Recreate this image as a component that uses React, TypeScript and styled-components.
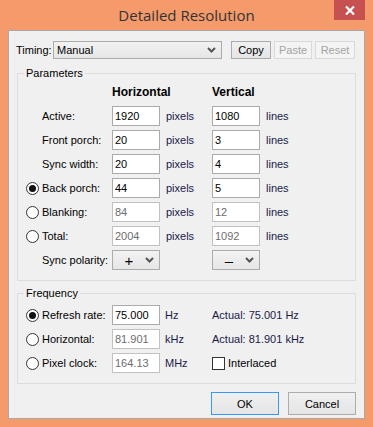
import React from 'react';
import styled, { createGlobalStyle } from 'styled-components';

const GlobalStyle = createGlobalStyle`
	body {
		margin: 0;
		background: #F49A6B;
		font-family: "Liberation Sans", Arial, sans-serif;
	}
`;

const Window = styled.div`
	width: 373px;
	height: 427px;
	background: #F49A6B;
	display: flex;
	flex-direction: column;
	box-sizing: border-box;
	padding: 0 8px 8px 8px;
`;

const TitleBar = styled.div`
	height: 30px;
	display: grid;
	grid-template-columns: 1fr auto 1fr;
	margin: 0 -8px;
	padding: 0 8px;
`;

const Title = styled.div`
	grid-column: 2;
	font-family: "Open Sans", "Noto Sans", sans-serif;
	font-size: 15px;
	line-height: 30px;
	color: #333;
`;

const CloseButton = styled.div`
	grid-column: 3;
	justify-self: end;
	width: 31px;
	height: 20px;
	background: #C75050;
	display: flex;
	align-items: center;
	justify-content: center;
`;

const Client = styled.div`
	flex: 1;
	background: #F0F0F0;
	border: 1px solid #a9a9a9;
	padding: 0 8px;
	display: flex;
	flex-direction: column;
	font-size: 11px;
	color: #000;
`;

const TimingRow = styled.div`
	display: flex;
	align-items: center;
	margin-top: 10px;
	height: 18px;
`;

const TimingLabel = styled.span`
	width: 37px;
	margin-left: -1px;
`;

const Combo = styled.div<{ $width: number; $height?: number; $center?: boolean }>`
	width: ${p => p.$width}px;
	height: ${p => p.$height ?? 20}px;
	box-sizing: border-box;
	border: 1px solid #acacac;
	background: linear-gradient(#f2f2f2, #e6e6e6);
	display: flex;
	align-items: center;
	padding: 0 5px 0 ${p => (p.$center ? 0 : 3)}px;
	color: #000;
`;

const ComboText = styled.span<{ $center?: boolean }>`
	flex: 1;
	text-align: ${p => (p.$center ? 'center' : 'left')};
	font-size: ${p => (p.$center ? 15 : 11)}px;
	line-height: 1;
`;

const ToolButton = styled.div<{ $width: number; $disabled?: boolean }>`
	width: ${p => p.$width}px;
	height: 18px;
	box-sizing: border-box;
	margin-left: 3px;
	border: 1px solid ${p => (p.$disabled ? '#d9d9d9' : '#acacac')};
	background: ${p => (p.$disabled ? '#f4f4f4' : 'linear-gradient(#f0f0f0, #e5e5e5)')};
	color: ${p => (p.$disabled ? '#a3a3a3' : '#000')};
	display: flex;
	align-items: center;
	justify-content: center;
`;

const Group = styled.fieldset<{ $top: number }>`
	margin: ${p => p.$top}px 0 0 0;
	padding: 0 8px 8px 8px;
	border: 1px solid #dcdcdc;
	min-width: 0;
`;

const Legend = styled.legend`
	padding: 0 2px;
	margin-left: -2px;
	line-height: 14px;
	color: #000;
`;

const Grid = styled.div<{ $padTop: number }>`
	display: grid;
	grid-template-columns: 16px 70px 48px 52px 48px 1fr;
	grid-auto-rows: 24px;
	align-items: center;
	padding-top: ${p => p.$padTop}px;
`;

const HeaderCell = styled.div<{ $col: number }>`
	grid-column: ${p => p.$col} / span 2;
	font-weight: bold;
	font-size: 12px;
	height: 20px;
	line-height: 20px;
`;

const Label = styled.span`
	grid-column: 2;
	white-space: nowrap;
`;

const Unit = styled.span<{ $pad?: number }>`
	padding-left: ${p => p.$pad ?? 6}px;
	color: #1a1a4a;
	white-space: nowrap;
`;

const Field = styled.div<{ $disabled?: boolean }>`
	height: 20px;
	box-sizing: border-box;
	border: 1px solid ${p => (p.$disabled ? '#c2c2c2' : '#ababab')};
	background: #fff;
	padding: 0 2px;
	display: flex;
	align-items: center;
	color: ${p => (p.$disabled ? '#6d6d6d' : '#000')};
`;

const Radio = styled.span<{ $checked?: boolean }>`
	grid-column: 1;
	width: 13px;
	height: 13px;
	box-sizing: border-box;
	border-radius: 50%;
	border: 1px solid #333;
	background: #fff;
	display: flex;
	align-items: center;
	justify-content: center;
	&::after {
		content: '';
		width: 7px;
		height: 7px;
		border-radius: 50%;
		background: ${p => (p.$checked ? '#111' : 'transparent')};
	}
`;

const Actual = styled.span`
	grid-column: 5 / span 2;
	white-space: nowrap;
	color: #1a1a4a;
`;

const CheckWrap = styled.div`
	grid-column: 5 / span 2;
	display: flex;
	align-items: center;
	gap: 3px;
`;

const CheckBox = styled.span`
	width: 13px;
	height: 13px;
	box-sizing: border-box;
	border: 1px solid #333;
	background: #fff;
`;

const ButtonRow = styled.div`
	display: flex;
	justify-content: flex-end;
	gap: 9px;
	margin-top: 8px;
`;

const DialogButton = styled.div<{ $default?: boolean }>`
	width: 68px;
	height: 23px;
	box-sizing: border-box;
	border: 1px solid ${p => (p.$default ? '#3399ff' : '#acacac')};
	background: linear-gradient(#f0f0f0, #e5e5e5);
	display: flex;
	align-items: center;
	justify-content: center;
	font-size: 11px;
`;

const Chevron = () => (
	<svg width="9" height="6" viewBox="0 0 9 6">
		<path d="M1 1 L4.5 4.5 L8 1" fill="none" stroke="#555" strokeWidth="2" />
	</svg>
);

interface RowData {
	label: string;
	radio?: 'on' | 'off';
	h: string;
	v: string;
	disabled?: boolean;
}

const rows: RowData[] = [
	{ label: 'Active:', h: '1920', v: '1080' },
	{ label: 'Front porch:', h: '20', v: '3' },
	{ label: 'Sync width:', h: '20', v: '4' },
	{ label: 'Back porch:', radio: 'on', h: '44', v: '5' },
	{ label: 'Blanking:', radio: 'off', h: '84', v: '12', disabled: true },
	{ label: 'Total:', radio: 'off', h: '2004', v: '1092', disabled: true }
];

const freqRows = [
	{ label: 'Refresh rate:', checked: true, value: '75.000', unit: 'Hz', disabled: false },
	{ label: 'Horizontal:', checked: false, value: '81.901', unit: 'kHz', disabled: true },
	{ label: 'Pixel clock:', checked: false, value: '164.13', unit: 'MHz', disabled: true }
];

const App = () => (
	<>
		<GlobalStyle />
		<Window>
			<TitleBar>
				<Title>Detailed Resolution</Title>
				<CloseButton>
					<svg width="10" height="9" viewBox="0 0 10 9">
						<path d="M1 0.5 L9 8.5 M9 0.5 L1 8.5" stroke="#fff" strokeWidth="2.2" />
					</svg>
				</CloseButton>
			</TitleBar>
			<Client>
				<TimingRow>
					<TimingLabel>Timing:</TimingLabel>
					<Combo $width={169} $height={18}>
						<ComboText>Manual</ComboText>
						<Chevron />
					</Combo>
					<ToolButton $width={40} style={{ marginLeft: 9 }}>Copy</ToolButton>
					<ToolButton $width={38} $disabled>Paste</ToolButton>
					<ToolButton $width={40} $disabled>Reset</ToolButton>
				</TimingRow>

				<Group $top={7}>
					<Legend>Parameters</Legend>
					<Grid $padTop={0}>
						<HeaderCell $col={3}>Horizontal</HeaderCell>
						<HeaderCell $col={5}>Vertical</HeaderCell>
						{rows.map(r => (
							<React.Fragment key={r.label}>
								{r.radio ? <Radio $checked={r.radio === 'on'} /> : <span />}
								<Label>{r.label}</Label>
								<Field $disabled={r.disabled}>{r.h}</Field>
								<Unit>pixels</Unit>
								<Field $disabled={r.disabled}>{r.v}</Field>
								<Unit>lines</Unit>
							</React.Fragment>
						))}
						<Label>Sync polarity:</Label>
						<Combo $width={48} $center>
							<ComboText $center>+</ComboText>
							<Chevron />
						</Combo>
						<span />
						<Combo $width={48} $center>
							<ComboText $center>–</ComboText>
							<Chevron />
						</Combo>
					</Grid>
				</Group>

				<Group $top={5}>
					<Legend>Frequency</Legend>
					<Grid $padTop={3}>
						{freqRows.map((r, i) => (
							<React.Fragment key={r.label}>
								<Radio $checked={r.checked} />
								<Label>{r.label}</Label>
								<Field $disabled={r.disabled}>{r.value}</Field>
								<Unit $pad={5}>{r.unit}</Unit>
								{i === 0 && <Actual>Actual: 75.001 Hz</Actual>}
								{i === 1 && <Actual>Actual: 81.901 kHz</Actual>}
								{i === 2 && (
									<CheckWrap>
										<CheckBox />
										<span>Interlaced</span>
									</CheckWrap>
								)}
							</React.Fragment>
						))}
					</Grid>
				</Group>

				<ButtonRow>
					<DialogButton $default>OK</DialogButton>
					<DialogButton>Cancel</DialogButton>
				</ButtonRow>
			</Client>
		</Window>
	</>
);

export default App;
